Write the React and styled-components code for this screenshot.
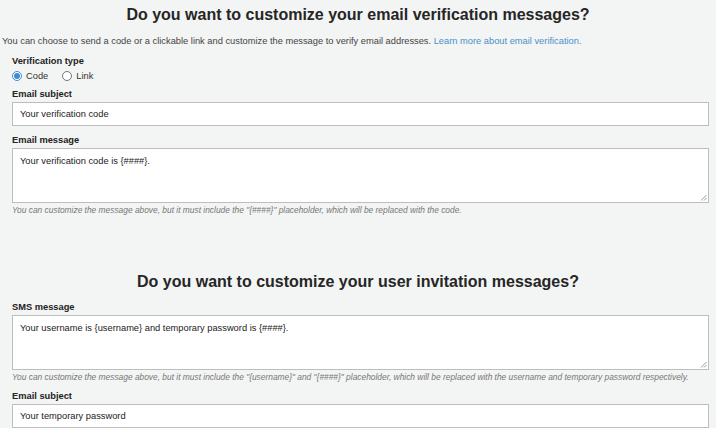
import React from "react";
import styled, { createGlobalStyle } from "styled-components";

const GlobalStyle = createGlobalStyle`
  html, body {
    margin: 0;
    padding: 0;
    background: #f3f4f4;
  }
  body {
    font-family: "Liberation Sans", Arial, sans-serif;
    color: #333;
  }
`;

const Page = styled.div`
  width: 716px;
  height: 428px;
  overflow: hidden;
  background: #f3f4f4;
`;

const Section = styled.section`
  margin-top: ${(p) => p.$top || 0}px;
`;

const Heading = styled.h2`
  margin: 0;
  padding-top: ${(p) => p.$padTop || 0}px;
  text-align: center;
  font-size: 16px;
  line-height: 22px;
  font-weight: bold;
  color: #262626;
`;

const Intro = styled.p`
  margin: 9px 0 0 2px;
  font-size: 9.3px;
  line-height: 12px;
  color: #444;

  a {
    color: #4a90c8;
    text-decoration: none;
  }
`;

const Form = styled.div`
  padding: 0 7px 0 12px;
`;

const Field = styled.div`
  margin-top: ${(p) => p.$top || 0}px;
`;

const Label = styled.div`
  font-size: 9.3px;
  line-height: 12px;
  font-weight: bold;
  color: #222;
`;

const RadioRow = styled.div`
  display: flex;
  align-items: center;
  gap: 14px;
  margin-top: 3px;
  font-size: 9.3px;
  line-height: 12px;
  color: #333;
`;

const RadioOption = styled.label`
  display: flex;
  align-items: center;
  gap: 4px;
`;

const RadioDot = styled.span`
  box-sizing: border-box;
  width: 10px;
  height: 10px;
  border-radius: 50%;
  border: 1px solid ${(p) => (p.$checked ? "#3f8ad4" : "#767676")};
  background: #fff;
  display: flex;
  align-items: center;
  justify-content: center;

  &::after {
    content: "";
    width: 6px;
    height: 6px;
    border-radius: 50%;
    background: ${(p) => (p.$checked ? "#3f8ad4" : "transparent")};
  }
`;

const TextInput = styled.div`
  box-sizing: border-box;
  margin-top: 2px;
  height: 24px;
  padding: 0 7px;
  display: flex;
  align-items: center;
  background: #fff;
  border: 1px solid #bdbdbd;
  font-size: 9.3px;
  color: #222;
`;

const TextArea = styled.div`
  position: relative;
  box-sizing: border-box;
  margin-top: 2px;
  height: 55px;
  padding: 6px 7px;
  background: #fff;
  border: 1px solid #bdbdbd;
  font-size: 9.3px;
  line-height: 12px;
  color: #222;
`;

const Grip = styled.svg`
  position: absolute;
  right: 1px;
  bottom: 1px;
`;

const Help = styled.div`
  margin-top: 2px;
  font-size: 8.4px;
  line-height: 10px;
  font-style: italic;
  color: #777;
`;

const ResizeGrip = () => (
  <Grip width="7" height="7" viewBox="0 0 7 7">
    <path d="M6.5 1 L1 6.5 M6.5 4 L4 6.5" stroke="#999" strokeWidth="1" />
  </Grip>
);

export default function App() {
  return (
    <Page>
      <GlobalStyle />
      <Section>
        <Heading $padTop={4}>Do you want to customize your email verification messages?</Heading>
        <Intro>
          You can choose to send a code or a clickable link and customize the message to verify email addresses.{" "}
          <a href="#">Learn more about email verification.</a>
        </Intro>
        <Form>
          <Field $top={8}>
            <Label>Verification type</Label>
            <RadioRow>
              <RadioOption>
                <RadioDot $checked />
                Code
              </RadioOption>
              <RadioOption>
                <RadioDot />
                Link
              </RadioOption>
            </RadioRow>
          </Field>
          <Field $top={6}>
            <Label>Email subject</Label>
            <TextInput>Your verification code</TextInput>
          </Field>
          <Field $top={8}>
            <Label>Email message</Label>
            <TextArea>
              Your verification code is {"{####}"}.
              <ResizeGrip />
            </TextArea>
            <Help>
              You can customize the message above, but it must include the "{"{####}"}" placeholder, which will be replaced with the code.
            </Help>
          </Field>
        </Form>
      </Section>
      <Section $top={56}>
        <Heading>Do you want to customize your user invitation messages?</Heading>
        <Form>
          <Field $top={8}>
            <Label>SMS message</Label>
            <TextArea>
              Your username is {"{username}"} and temporary password is {"{####}"}.
              <ResizeGrip />
            </TextArea>
            <Help>
              You can customize the message above, but it must include the "{"{username}"}" and "{"{####}"}" placeholder, which will be replaced with the username and temporary password respectively.
            </Help>
          </Field>
          <Field $top={8}>
            <Label>Email subject</Label>
            <TextInput>Your temporary password</TextInput>
          </Field>
        </Form>
      </Section>
    </Page>
  );
}
